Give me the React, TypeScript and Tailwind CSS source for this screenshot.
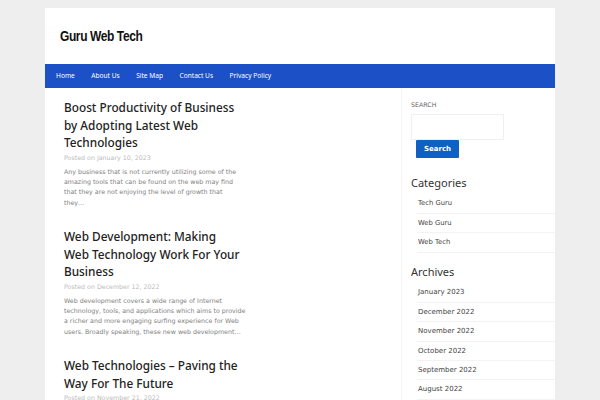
import React from "react";

const posts = [
  {
    title: "Boost Productivity of Business by Adopting Latest Web Technologies",
    date: "January 10, 2023",
    excerpt: (
      <>
        Any business that is not currently utilizing some of the amazing tools that can be found on the web may find that
        they are not enjoying the level of growth that
        <br />
        they…
      </>
    ),
  },
  {
    title: "Web Development: Making Web Technology Work For Your Business",
    date: "December 12, 2022",
    excerpt: (
      <>
        Web development covers a wide range of Internet technology, tools, and applications which aims to provide a richer
        and more engaging surfing experience for Web users. Broadly speaking, these new web development…
      </>
    ),
  },
  {
    title: "Web Technologies – Paving the Way For The Future",
    date: "November 21, 2022",
    excerpt: (
      <>
        The world of web technologies is constantly changing and evolving, offering new opportunities for businesses of
        every size.
      </>
    ),
  },
];

const nav = ["Home", "About Us", "Site Map", "Contact Us", "Privacy Policy"];
const cats = ["Tech Guru", "Web Guru", "Web Tech"];
const archives = [
  "January 2023",
  "December 2022",
  "November 2022",
  "October 2022",
  "September 2022",
  "August 2022",
  "July 2022",
];

const dv = { fontFamily: "'DejaVu Sans', sans-serif" };

export default function App() {
  return (
    <div className="w-[600px] h-[400px] overflow-hidden bg-[#eeeeee] pt-[8px]" style={{ fontFamily: "'Noto Sans', sans-serif" }}>
      <div className="mx-[45px] w-[510px] bg-white">
        <div className="h-[56px] flex items-center pl-[15px]">
          <span
            className="inline-block origin-left scale-x-[0.8] text-[15px] font-bold text-[#111] tracking-[-0.5px]"
            style={{ fontFamily: "'Liberation Sans', sans-serif" }}
          >
            Guru Web Tech
          </span>
        </div>
        <div className="h-[24px] bg-[#1c50c6] flex items-center pl-[11px] gap-[16.5px]">
          {nav.map((n) => (
            <span key={n} className="text-[6.6px] text-white" style={{ fontFamily: "'Noto Sans', sans-serif" }}>
              {n}
            </span>
          ))}
        </div>
        <div className="flex">
          <div className="w-[356px] pl-[19px] pt-[11px]">
            {posts.map((p) => (
              <div key={p.title} className="w-[182px] mb-[20px]">
                <h2 className="w-[178px] text-[11.8px] leading-[17.5px] font-medium text-[#222]" style={{ fontFamily: "'Noto Sans', sans-serif" }}>
                  {p.title}
                </h2>
                <div className="text-[6.3px] text-[#bbbbbb] mt-[1px] leading-[10px]" style={dv}>
                  Posted on {p.date}
                </div>
                <p className="text-[6.3px] leading-[10.4px] text-[#808080] mt-[4px]" style={dv}>
                  {p.excerpt}
                </p>
              </div>
            ))}
          </div>
          <div className="w-[154px] border-l border-[#f5f5f5] pl-[9px] pt-[12px] h-[320px]" style={dv}>
            <div className="text-[6.3px] text-[#666] leading-[10px]">SEARCH</div>
            <div className="mt-[4px] w-[93px] h-[26px] border border-[#f0f0f0]" />
            <button className="block ml-[5px] w-[43px] h-[18px] bg-[#0c62c4] text-white text-[7px] font-bold rounded-[1px]">
              Search
            </button>
            <div className="mt-[18px] text-[11px] text-[#333] leading-[14px]" style={{ fontFamily: "'Noto Sans', sans-serif" }}>Categories</div>
            <ul className="mt-[4px] ml-[6px]">
              {cats.map((c) => (
                <li key={c} className="h-[19.5px] flex items-center border-b border-[#f3f3f3] text-[6.8px] text-[#444] pl-[1px]">
                  {c}
                </li>
              ))}
            </ul>
            <div className="mt-[12px] text-[11px] text-[#333] leading-[14px]" style={{ fontFamily: "'Noto Sans', sans-serif" }}>Archives</div>
            <ul className="mt-[5px] ml-[6px]">
              {archives.map((c) => (
                <li key={c} className="h-[19.4px] flex items-center border-b border-[#f3f3f3] text-[7px] text-[#444] pl-[1px]">
                  {c}
                </li>
              ))}
            </ul>
          </div>
        </div>
      </div>
    </div>
  );
}
